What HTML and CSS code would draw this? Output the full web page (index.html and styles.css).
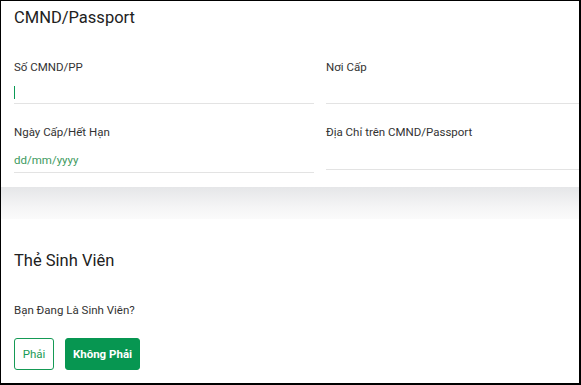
FILE: index.html
```html
<!DOCTYPE html>
<html lang="vi">
<head>
<meta charset="utf-8">
<title>CMND/Passport</title>
<link rel="stylesheet" href="styles.css">
</head>
<body>
<div class="frame">
  <section class="card card-id">
    <h2 class="card-title">CMND/Passport</h2>
    <div class="fields">
      <div class="field">
        <div class="label">Số CMND/PP</div>
        <div class="input input-active"><span class="caret"></span></div>
      </div>
      <div class="field">
        <div class="label">Nơi Cấp</div>
        <div class="input"></div>
      </div>
      <div class="field">
        <div class="label">Ngày Cấp/Hết Hạn</div>
        <div class="input input-date"><span class="placeholder">dd/mm/yyyy</span></div>
      </div>
      <div class="field">
        <div class="label">Địa Chỉ trên CMND/Passport</div>
        <div class="input input-short"></div>
      </div>
    </div>
  </section>
  <div class="shadow-band"></div>
  <section class="card card-student">
    <h2 class="card-title">Thẻ Sinh Viên</h2>
    <div class="label question">Bạn Đang Là Sinh Viên?</div>
    <div class="buttons">
      <button class="btn btn-outline">Phải</button>
      <button class="btn btn-solid">Không Phải</button>
    </div>
  </section>
</div>
</body>
</html>
```

FILE: styles.css
```css
* { box-sizing: border-box; }
html, body { margin: 0; padding: 0; background: #fff; }
body { font-family: Roboto, "Noto Sans", sans-serif; color: #333; }

.frame {
  width: 581px;
  height: 385px;
  border-style: solid;
  border-color: #000;
  border-width: 1px 2px 2px 1px;
  background: #fff;
  overflow: hidden;
}

.card { background: #fff; padding-left: 13px; }

.card-title {
  margin: 0;
  font-size: 16.5px;
  line-height: 22px;
  font-weight: 400;
  color: #212121;
}

.card-id { height: 186px; padding-top: 6px; }

.fields {
  margin-top: 31px;
  display: grid;
  grid-template-columns: 300px 1fr;
  column-gap: 12px;
  row-gap: 21px;
  align-items: start;
}

.label {
  font-size: 11.5px;
  line-height: 14px;
  color: #333;
}

.input {
  height: 30px;
  border-bottom: 1px solid #e3e3e3;
  display: flex;
  align-items: flex-end;
}
.input-active { padding-bottom: 4px; }
.caret { display: block; width: 1px; height: 13px; background: #0a9a55; }
.input-date { height: 34px; padding-bottom: 5px; }
.input-short { height: 31px; }
.placeholder { font-size: 11.5px; line-height: 14px; color: #3d9a5e; }

.shadow-band {
  height: 32px;
  background: linear-gradient(#e5e6e8, #f4f4f5 60%, #fbfbfb);
}

.card-student { padding-top: 31px; }
.question { margin-top: 31px; }

.buttons { display: flex; gap: 11px; margin-top: 21px; }

.btn {
  height: 32px;
  font-family: Roboto, "Noto Sans", sans-serif;
  font-size: 11.5px;
  border-radius: 3px;
  padding: 0;
  cursor: pointer;
}
.btn-outline {
  width: 40px;
  background: #fff;
  color: #1a9a55;
  border: 1px solid #159a55;
}
.btn-solid {
  width: 75px;
  background: #079651;
  color: #fff;
  font-weight: 700;
  border: 1px solid #079651;
}
```
